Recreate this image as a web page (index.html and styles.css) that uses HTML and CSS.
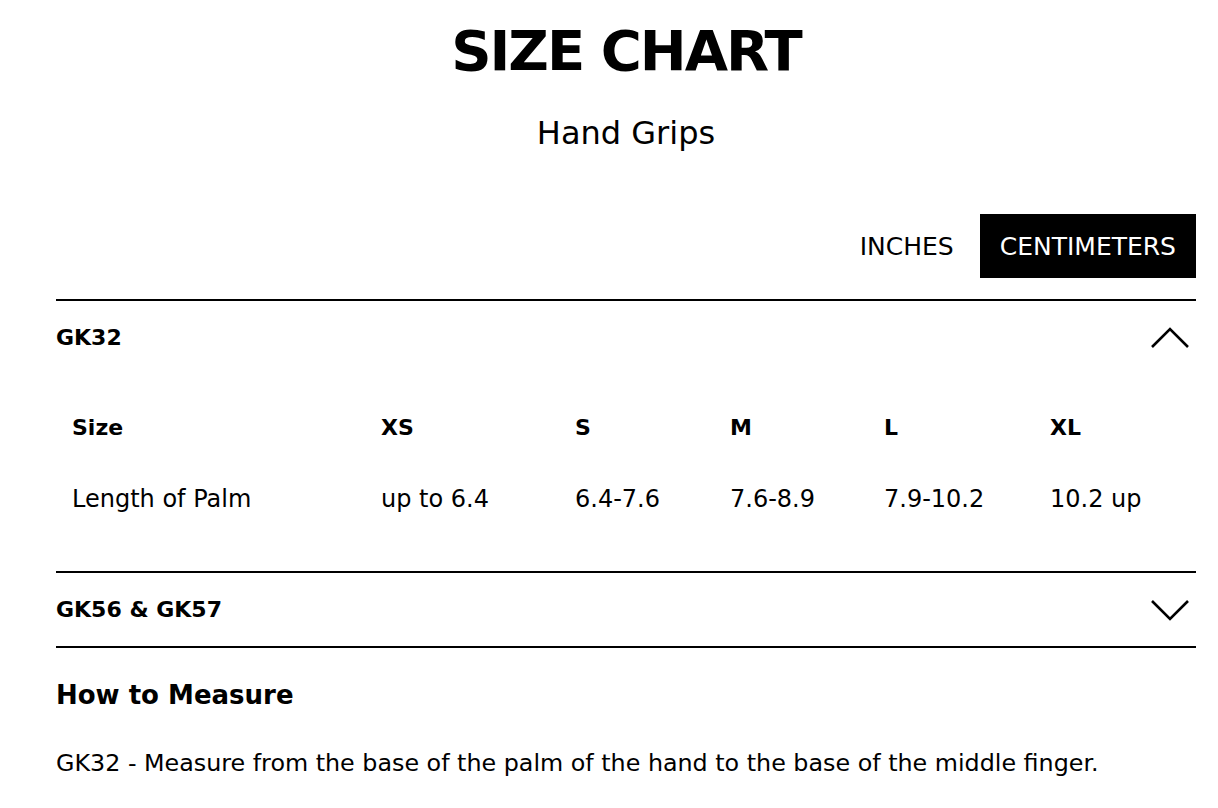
FILE: index.html
```html
<!DOCTYPE html>
<html>
<head>
<meta charset="utf-8">
<link rel="stylesheet" href="styles.css">
</head>
<body>
<main class="page">
  <h1 class="title">SIZE CHART</h1>
  <p class="subtitle">Hand Grips</p>
  <div class="units">
    <button class="unit">INCHES</button>
    <button class="unit active">CENTIMETERS</button>
  </div>
  <section class="acc open">
    <div class="acc-head">
      <span class="acc-title">GK32</span>
      <svg class="chev" width="40" height="22" viewBox="0 0 40 22"><polyline points="2,20 20,2 38,20" fill="none" stroke="#000" stroke-width="2.6"/></svg>
    </div>
    <div class="acc-body">
      <div class="grid">
        <div class="cell th">Size</div>
        <div class="cell th">XS</div>
        <div class="cell th">S</div>
        <div class="cell th">M</div>
        <div class="cell th">L</div>
        <div class="cell th">XL</div>
        <div class="cell">Length of Palm</div>
        <div class="cell">up to 6.4</div>
        <div class="cell">6.4-7.6</div>
        <div class="cell">7.6-8.9</div>
        <div class="cell">7.9-10.2</div>
        <div class="cell">10.2 up</div>
      </div>
    </div>
  </section>
  <section class="acc">
    <div class="acc-head">
      <span class="acc-title">GK56 &amp; GK57</span>
      <svg class="chev" width="40" height="22" viewBox="0 0 40 22"><polyline points="2,2 20,20 38,2" fill="none" stroke="#000" stroke-width="2.6"/></svg>
    </div>
  </section>
  <div class="rule"></div>
  <h2 class="measure">How to Measure</h2>
  <p class="note">GK32 - Measure from the base of the palm of the hand to the base of the middle finger.</p>
</main>
</body>
</html>
```

FILE: styles.css
```css
* { box-sizing: border-box; }
html, body { margin: 0; padding: 0; background: #fff; }
body {
  font-family: "DejaVu Sans", "Liberation Sans", sans-serif;
  color: #000;
}
.page {
  margin: 0 22px 0 56px;
  padding-top: 16px;
}
.title {
  margin: 0;
  text-align: center;
  font-size: 56px;
  font-weight: 700;
  line-height: 70px;
  letter-spacing: -2px;
}
.subtitle {
  margin: 28px 0 0;
  text-align: center;
  font-size: 32px;
  line-height: 38px;
  font-weight: 400;
}
.units {
  display: flex;
  justify-content: flex-end;
  margin-top: 62px;
  gap: 6px;
}
.unit {
  font-family: inherit;
  font-size: 25px;
  border: none;
  background: #fff;
  color: #000;
  height: 64px;
  padding: 0 20px;
  cursor: pointer;
}
.unit.active {
  background: #000;
  color: #fff;
}
.acc {
  border-top: 2px solid #000;
  margin-top: 21px;
}
.acc + .acc { margin-top: 0; }
.acc-head {
  display: flex;
  align-items: center;
  justify-content: space-between;
  height: 73px;
  padding-right: 6px;
}
.acc-title {
  font-size: 22px;
  font-weight: 700;
}
.acc-body {
  padding: 18px 0 37px;
}
.grid {
  display: grid;
  grid-template-columns: 309px 194px 155px 154px 166px 1fr;
  grid-auto-rows: 71px;
  align-items: center;
}
.cell {
  padding-left: 16px;
  font-size: 24px;
}
.cell.th { font-weight: 700; font-size: 22px; }
.rule {
  border-top: 2px solid #000;
}
.measure {
  margin: 30px 0 0;
  font-size: 26px;
  font-weight: 700;
  line-height: 34px;
}
.note {
  margin: 36px 0 0;
  font-size: 23.8px;
  line-height: 30px;
}
```
